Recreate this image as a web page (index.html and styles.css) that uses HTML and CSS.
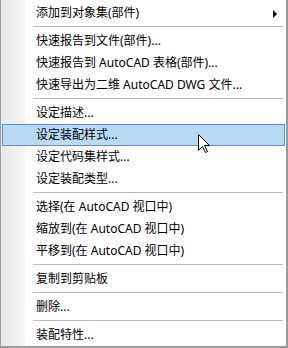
FILE: index.html
```html
<!DOCTYPE html>
<html lang="zh-CN">
<head>
  <meta charset="UTF-8">
  <title>装配右键菜单</title>
  <link rel="stylesheet" href="styles.css">
</head>
<body>
  <div class="menu">
    <div class="item has-sub">添加到对象集(部件)<span class="arrow"></span></div>
    <div class="sep"></div>
    <div class="item">快速报告到文件(部件)...</div>
    <div class="item">快速报告到 AutoCAD 表格(部件)...</div>
    <div class="item">快速导出为二维 AutoCAD DWG 文件...</div>
    <div class="sep"></div>
    <div class="item">设定描述...</div>
    <div class="item active">设定装配样式...</div>
    <div class="item">设定代码集样式...</div>
    <div class="item">设定装配类型...</div>
    <div class="sep"></div>
    <div class="item">选择(在 AutoCAD 视口中)</div>
    <div class="item">缩放到(在 AutoCAD 视口中)</div>
    <div class="item">平移到(在 AutoCAD 视口中)</div>
    <div class="sep"></div>
    <div class="item">复制到剪贴板</div>
    <div class="sep"></div>
    <div class="item">删除...</div>
    <div class="sep"></div>
    <div class="item">装配特性...</div>

    <!-- mouse pointer over the hovered item -->
    <svg class="cursor" width="13" height="20" viewBox="0 0 13 20">
      <path d="M0.5 0.5 V16.5 L4.5 12.5 L7.5 18.5 L9.5 17.5 L6.5 11.5 H11.5 Z" fill="#fff" stroke="#000" stroke-width="1" stroke-linejoin="miter"/>
    </svg>
  </div>
</body>
</html>
```

FILE: styles.css
```css
/* Base styles */
body {
  margin: 0;
  font-family: "Noto Sans", "Noto Sans CJK SC", sans-serif;
  font-size: 12px;
  color: #000;
}

/* Menu frame */
.menu {
  position: relative;
  box-sizing: border-box;
  width: 288px;
  height: 348px;
  padding: 2px 1px 0 1px;
  border-left: 1px solid #a0a0a0;
  border-right: 2px solid #9a9a9a;
  border-bottom: 2px solid #9a9a9a;
  background:
    linear-gradient(to right, #e9e9e9, #f5f5f5) 0 0 / 24px 100% no-repeat,
    #fff;
}

/* Items */
.item {
  position: relative;
  box-sizing: border-box;
  height: 22px;
  line-height: 20px;
  padding-left: 33px;
  border: 1px solid transparent;
  white-space: nowrap;
}

.item.active {
  background: #b9d9f5;
  border-color: #4b93dc;
}

.arrow {
  position: absolute;
  right: 7px;
  top: 7px;
  width: 0;
  height: 0;
  border-top: 4px solid transparent;
  border-bottom: 4px solid transparent;
  border-left: 4px solid #000;
}

/* Separators */
.sep {
  height: 1px;
  margin: 2px 2px 3px 31px;
  background: #bdbdbd;
}

/* Pointer */
.cursor {
  position: absolute;
  left: 197px;
  top: 134px;
}
```
